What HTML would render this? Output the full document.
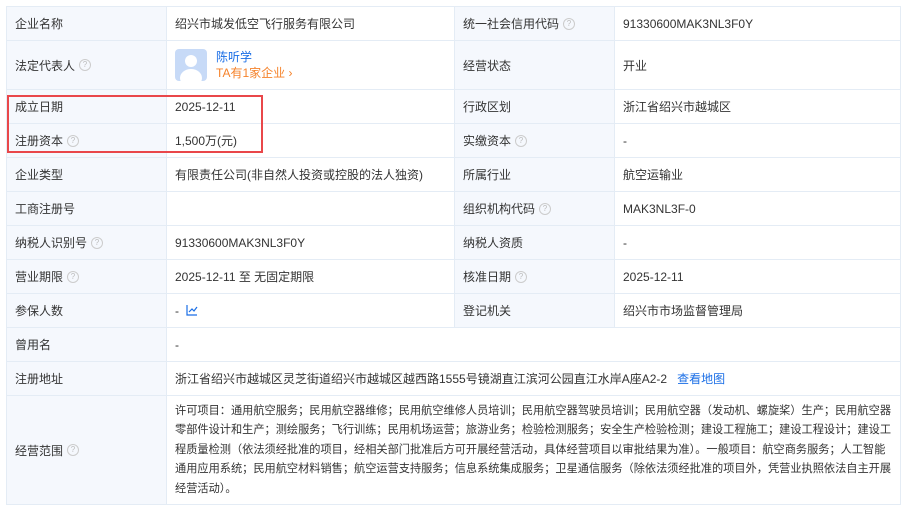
<!DOCTYPE html>
<html><head><meta charset="utf-8"><style>
body{margin:0;background:#fff;font-family:"Liberation Sans","Noto Sans CJK SC",sans-serif;font-size:12px;color:#333;overflow:hidden;}
table{position:absolute;left:6px;top:6px;border-collapse:collapse;table-layout:fixed;width:894px;}
td{border:1px solid #e4ecf5;padding:0 0 0 8px;height:33px;vertical-align:middle;white-space:nowrap;overflow:hidden;}
td.l{background:#f5f8fd;color:#333;}
.q{display:inline-block;width:10px;height:10px;border:1px solid #ccc;border-radius:50%;color:#bbb;font-size:8px;line-height:10px;text-align:center;margin-left:4px;vertical-align:middle;position:relative;top:-1px;}
a{color:#1a6ee6;text-decoration:none;}
.red{position:absolute;left:7px;top:95px;width:256px;height:58px;border:2px solid #e9474a;box-sizing:border-box;}
</style></head><body>
<table>
<colgroup><col style="width:160px"><col style="width:288px"><col style="width:160px"><col style="width:286px"></colgroup>
<tr><td class="l">企业名称</td><td>绍兴市城发低空飞行服务有限公司</td><td class="l">统一社会信用代码<span class="q">?</span></td><td>91330600MAK3NL3F0Y</td></tr>
<tr><td class="l" style="height:48px">法定代表人<span class="q">?</span></td><td><div style="display:flex;align-items:center"><div style="width:32px;height:32px;border-radius:4px;background:#c7daf7;margin-right:9px;position:relative;overflow:hidden"><div style="position:absolute;left:10px;top:6px;width:12px;height:12px;border-radius:50%;background:#fff"></div><div style="position:absolute;left:5px;top:20px;width:22px;height:18px;border-radius:50%;background:#fff"></div></div><div><div style="color:#1a6ee6;line-height:16px">陈听学</div><div style="color:#f5822a;line-height:17px">TA有1家企业 ›</div></div></div></td><td class="l">经营状态</td><td>开业</td></tr>
<tr><td class="l">成立日期</td><td>2025-12-11</td><td class="l">行政区划</td><td>浙江省绍兴市越城区</td></tr>
<tr><td class="l" style="height:32px">注册资本<span class="q">?</span></td><td>1,500万(元)</td><td class="l">实缴资本<span class="q">?</span></td><td>-</td></tr>
<tr><td class="l">企业类型</td><td>有限责任公司(非自然人投资或控股的法人独资)</td><td class="l">所属行业</td><td>航空运输业</td></tr>
<tr><td class="l">工商注册号</td><td></td><td class="l">组织机构代码<span class="q">?</span></td><td>MAK3NL3F-0</td></tr>
<tr><td class="l">纳税人识别号<span class="q">?</span></td><td>91330600MAK3NL3F0Y</td><td class="l">纳税人资质</td><td>-</td></tr>
<tr><td class="l">营业期限<span class="q">?</span></td><td>2025-12-11 至 无固定期限</td><td class="l">核准日期<span class="q">?</span></td><td>2025-12-11</td></tr>
<tr><td class="l">参保人数</td><td>- &nbsp;<svg width="12" height="11" viewBox="0 0 12 11" style="vertical-align:-1px"><path d="M1 0V10H11M3 7L6 4L8 6L11 2" fill="none" stroke="#1a6ee6" stroke-width="1.2"/></svg></td><td class="l">登记机关</td><td>绍兴市市场监督管理局</td></tr>
<tr><td class="l" style="height:32px">曾用名</td><td colspan="3">-</td></tr>
<tr><td class="l">注册地址</td><td colspan="3">浙江省绍兴市越城区灵芝街道绍兴市越城区越西路1555号镜湖直江滨河公园直江水岸A座A2-2 &nbsp; <a>查看地图</a></td></tr>
<tr><td class="l" style="height:108px">经营范围<span class="q">?</span></td><td colspan="3" style="line-height:19.5px;font-size:11.2px;padding-top:1px">许可项目：通用航空服务；民用航空器维修；民用航空维修人员培训；民用航空器驾驶员培训；民用航空器（发动机、螺旋桨）生产；民用航空器<br>零部件设计和生产；测绘服务；飞行训练；民用机场运营；旅游业务；检验检测服务；安全生产检验检测；建设工程施工；建设工程设计；建设工<br>程质量检测（依法须经批准的项目，经相关部门批准后方可开展经营活动，具体经营项目以审批结果为准）。一般项目：航空商务服务；人工智能<br>通用应用系统；民用航空材料销售；航空运营支持服务；信息系统集成服务；卫星通信服务（除依法须经批准的项目外，凭营业执照依法自主开展<br>经营活动）。</td></tr>
</table>
<div class="red"></div>
</body></html>
